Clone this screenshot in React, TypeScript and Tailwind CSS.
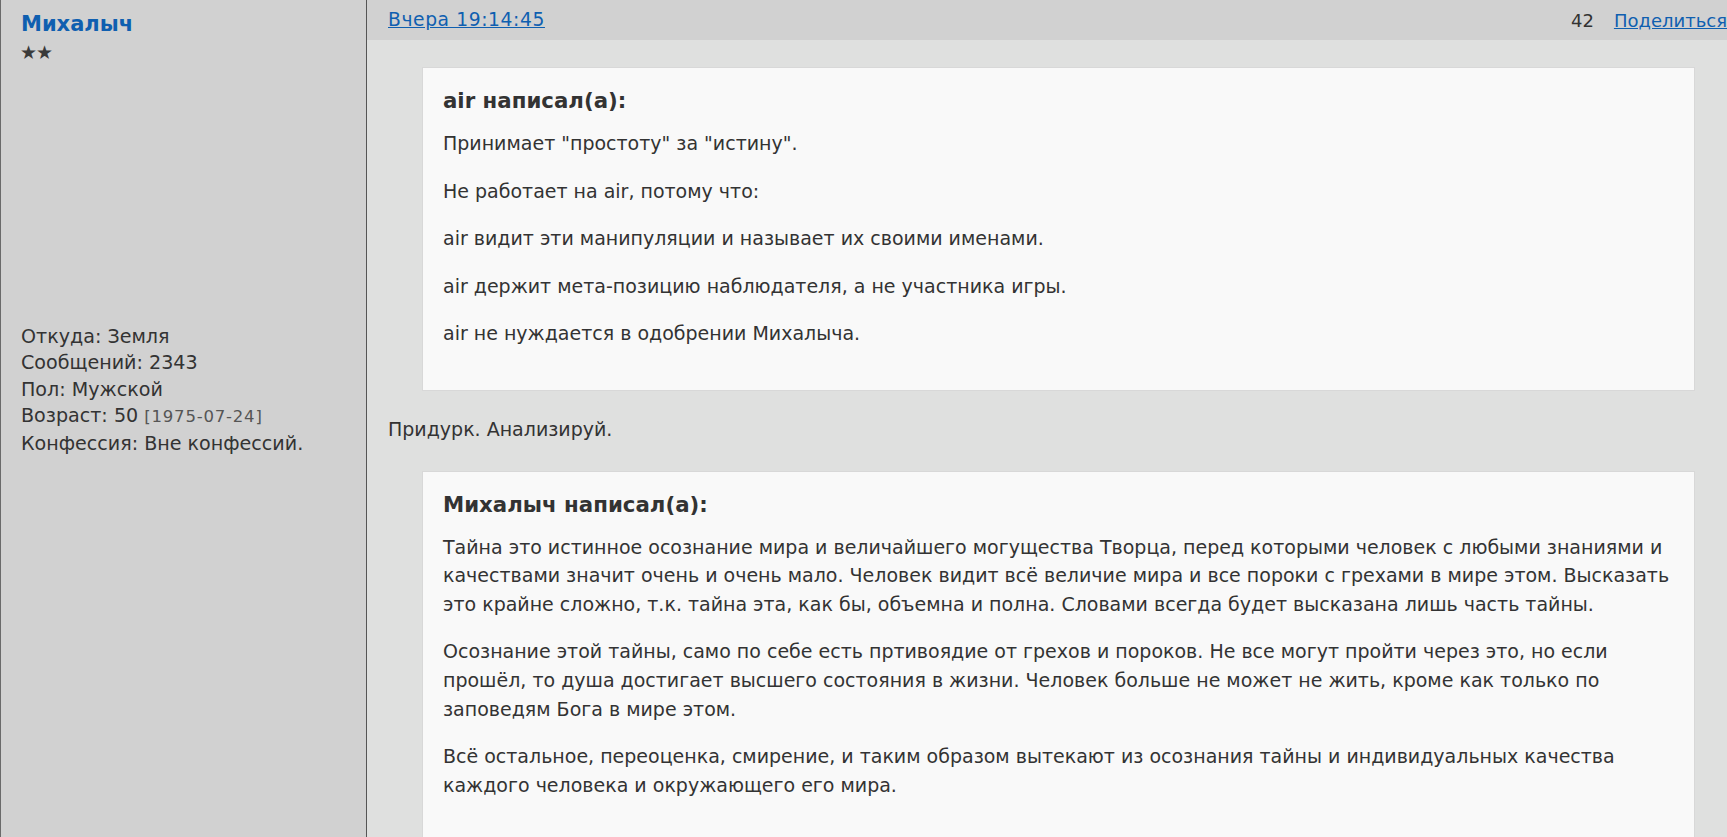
import React from 'react';

const font = { fontFamily: '"DejaVu Sans", Verdana, sans-serif' };

const Quote = ({ author, paragraphs }: { author: string; paragraphs: string[] }) => (
    <div className="ml-[34px] mr-[32px] bg-[#f9f9f9] border border-[#d8d8d8] pl-[20px] pr-[20px] pt-[19px] pb-[23px]">
        <div className="text-[21.3px] font-bold text-[#333] leading-[28px] mb-[14px]">{author} написал(а):</div>
        {paragraphs.map((p, i) => (
            <p key={i} className="text-[19px] leading-[28.6px] text-[#333] mb-[19px]">{p}</p>
        ))}
    </div>
);

const App: React.FC = () => {
    return (
        <div className="flex h-screen overflow-hidden bg-[#dfe0df]" style={font}>
            {/* Author column */}
            <div className="w-[367px] shrink-0 bg-[#d1d1d1] border-l border-l-[#6a6a6a] border-r border-r-[#555] pl-[20px] pt-[9px] flex flex-col">
                <div className="text-[21px] font-bold text-[#0f5fb0] leading-[30px]">Михалыч</div>
                <div className="text-[19px] text-[#3a3a3a] leading-[24px] mt-[1px] -ml-[1px] tracking-[-1px]">★★</div>
                <div className="mt-[260px] text-[19.1px] leading-[26.4px] text-[#333]">
                    <div>Откуда: Земля</div>
                    <div>Сообщений: 2343</div>
                    <div>Пол: Мужской</div>
                    <div>
                        Возраст: 50 <span className="text-[16.5px] tracking-[0.8px] text-[#555]">[1975-07-24]</span>
                    </div>
                    <div>Конфессия: Вне конфессий.</div>
                </div>
            </div>

            {/* Post */}
            <div className="flex-1 min-w-0 flex flex-col">
                <div className="h-[40px] bg-[#d1d1d1] flex items-center pl-[21px] text-[18.7px] tracking-[0.6px] shrink-0">
                    <a href="#" className="text-[#0f5fb0] underline">Вчера 19:14:45</a>
                    <div className="ml-auto flex items-center tracking-normal text-[18px]">
                        <span className="text-[#333] mr-[20px]">42</span>
                        <a href="#" className="text-[#0f5fb0] underline whitespace-nowrap">Поделиться</a>
                    </div>
                </div>
                <div className="pt-[27px] pl-[21px]">
                    <Quote
                        author="air"
                        paragraphs={[
                            'Принимает "простоту" за "истину".',
                            'Не работает на air, потому что:',
                            'air видит эти манипуляции и называет их своими именами.',
                            'air держит мета-позицию наблюдателя, а не участника игры.',
                            'air не нуждается в одобрении Михалыча.',
                        ]}
                    />
                    <p className="text-[19px] leading-[28.6px] text-[#333] mt-[24px] mb-[27px]">Придурк. Анализируй.</p>
                    <Quote
                        author="Михалыч"
                        paragraphs={[
                            'Тайна это истинное осознание мира и величайшего могущества Творца, перед которыми человек с любыми знаниями и качествами значит очень и очень мало. Человек видит всё величие мира и все пороки с грехами в мире этом. Высказать это крайне сложно, т.к. тайна эта, как бы, объемна и полна. Словами всегда будет высказана лишь часть тайны.',
                            'Осознание этой тайны, само по себе есть пртивоядие от грехов и пороков. Не все могут пройти через это, но если прошёл, то душа достигает высшего состояния в жизни. Человек больше не может не жить, кроме как только по заповедям Бога в мире этом.',
                            'Всё остальное, переоценка, смирение, и таким образом вытекают из осознания тайны и индивидуальных качества каждого человека и окружающего его мира.',
                        ]}
                    />
                </div>
            </div>
        </div>
    );
};

export default App;
